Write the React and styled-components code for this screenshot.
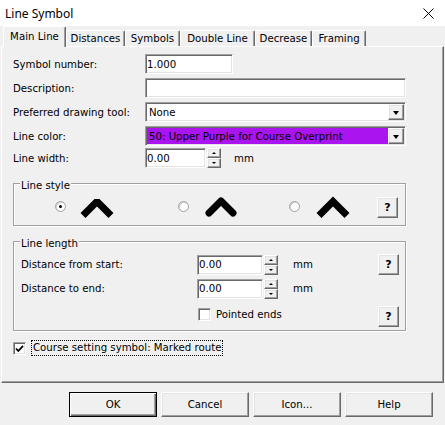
import styled, { createGlobalStyle, css } from 'styled-components'

const GlobalStyle = createGlobalStyle`
  html, body { margin: 0; padding: 0; background: #f0f0f0; }
  body { font-family: "DejaVu Sans", Tahoma, Verdana, sans-serif; font-size: 10.2px; color: #000; }
  * { box-sizing: border-box; }
`

const raised = css`
  background: #f0f0f0;
  border: 1px solid;
  border-color: #fff #696969 #696969 #fff;
  box-shadow: inset -1px -1px 0 #a0a0a0, inset 1px 1px 0 #e3e3e3;
`

const sunken = css`
  border: 1px solid;
  border-color: #a0a0a0 #fff #fff #a0a0a0;
  box-shadow: inset 1px 1px 0 #696969, inset -1px -1px 0 #e3e3e3;
`

const Window = styled.div`
  width: 445px;
  height: 425px;
  display: flex;
  flex-direction: column;
  background: #f0f0f0;
  overflow: hidden;
`

const TitleBar = styled.div`
  height: 26px;
  flex: none;
  background: #fff;
  display: flex;
  align-items: center;
  justify-content: space-between;
  padding: 0 11px 0 5px;
  font-family: "Noto Sans", "Open Sans", sans-serif;
  font-size: 12px;
`

const TabStrip = styled.div`
  height: 20px;
  flex: none;
  display: flex;
  align-items: flex-end;
  padding-left: 3px;
  position: relative;
  z-index: 1;
`

const Tab = styled.div`
  width: ${p => p.$w}px;
  height: ${p => (p.$active ? 21 : 16)}px;
  margin-bottom: ${p => (p.$active ? -1 : 0)}px;
  padding-bottom: ${p => (p.$active ? 2 : 0)}px;
  display: flex;
  align-items: center;
  justify-content: center;
  background: #f0f0f0;
  border-top: 1px solid #fff;
  border-left: 1px solid #fff;
  border-right: 1px solid #696969;
  box-shadow: inset -1px 0 0 #a0a0a0;
  border-top-left-radius: 2px;
  border-top-right-radius: 2px;
  white-space: nowrap;
`

const Panel = styled.div`
  margin-left: 1px;
  width: 443px;
  height: 337px;
  flex: none;
  border: 1px solid;
  border-color: #fff #696969 #696969 #fff;
  box-shadow: inset -1px -1px 0 #a0a0a0;
  padding: 7px 11px 0;
  display: flex;
  flex-direction: column;
`

const FieldRow = styled.div`
  display: flex;
  align-items: center;
  height: 20px;
  margin-top: ${p => p.$mt || 0}px;
`

const FieldLabel = styled.label`
  width: 132px;
  flex: none;
`

const TextBox = styled.div`
  ${sunken};
  background: #fff;
  width: ${p => p.$w}px;
  height: 20px;
  flex: none;
  padding-left: 1px;
  display: flex;
  align-items: center;
`

const Combo = styled.div`
  ${sunken};
  background: #fff;
  width: 261px;
  height: 20px;
  padding: 1px;
  display: flex;
`

const ComboValue = styled.div`
  flex: 1;
  display: flex;
  align-items: center;
  padding-left: 2px;
  background: ${p => p.$bg || '#fff'};
`

const DropButton = styled.div`
  ${raised};
  width: 16px;
  flex: none;
  display: flex;
  align-items: center;
  justify-content: center;
  &::after {
    content: '';
    border-left: 3.5px solid transparent;
    border-right: 3.5px solid transparent;
    border-top: 4px solid #000;
    margin-top: 1px;
  }
`

const SpinBox = styled.div`
  display: flex;
  gap: 1px;
  flex: none;
`

const SpinButtons = styled.div`
  width: ${p => p.$w}px;
  height: 20px;
  display: flex;
  flex-direction: column;
`

const SpinButton = styled.div`
  ${raised};
  flex: 1;
  display: flex;
  align-items: center;
  justify-content: center;
  &::after {
    content: '';
    border-left: 2px solid transparent;
    border-right: 2px solid transparent;
    ${p => (p.$down ? 'border-top: 2px solid #000;' : 'border-bottom: 2px solid #000;')}
  }
`

const Unit = styled.span`
  margin-left: ${p => p.$ml}px;
`

const Group = styled.div`
  position: relative;
  width: 393px;
  height: ${p => p.$h}px;
  margin-top: ${p => p.$mt}px;
  flex: none;
  border: 1px solid #a0a0a0;
  box-shadow: inset 1px 1px 0 #fff, 1px 1px 0 #fff;
`

const GroupTitle = styled.span`
  position: absolute;
  top: -4px;
  left: 6px;
  padding: 0 1px;
  line-height: 12px;
  background: #f0f0f0;
`

const StyleRow = styled.div`
  display: flex;
  align-items: center;
  height: 100%;
  padding-top: 6px;
`

const StyleOption = styled.div`
  display: flex;
  align-items: center;
  margin-left: ${p => p.$ml}px;
  gap: ${p => p.$gap}px;
`

const Radio = styled.span`
  width: 11px;
  height: 11px;
  margin-top: -3px;
  border-radius: 50%;
  background: #fff;
  border: 1px solid #a0a0a0;
  box-shadow: inset 1px 1px 0 #d0d0d0;
  display: flex;
  align-items: center;
  justify-content: center;
  &::after {
    content: '';
    width: 3px;
    height: 3px;
    border-radius: 50%;
    background: ${p => (p.$checked ? '#000' : 'transparent')};
  }
`

const HelpButton = styled.div`
  ${raised};
  width: 21px;
  height: 21px;
  margin-left: ${p => p.$ml || 0}px;
  display: flex;
  align-items: center;
  justify-content: center;
  font-weight: bold;
  font-size: 11px;
`

const LengthRows = styled.div`
  padding: 12px 6px 0 7px;
  display: flex;
  flex-direction: column;
`

const LengthRow = styled.div`
  display: grid;
  grid-template-columns: 176px 81px 1fr 21px;
  align-items: center;
  height: 21px;
  margin-top: ${p => p.$mt || 0}px;
`

const CheckRow = styled.div`
  display: flex;
  align-items: center;
  gap: 5px;
  margin-top: ${p => p.$mt || 0}px;
  margin-left: ${p => p.$ml || 0}px;
  white-space: nowrap;
`

const CheckBox = styled.span`
  ${sunken};
  background: #fff;
  width: 13px;
  height: 13px;
  flex: none;
  display: flex;
  align-items: center;
  justify-content: center;
`

const FocusLabel = styled.span`
  border: 1px dotted #000;
  padding: 0 1px;
  line-height: 14px;
`

const ButtonRow = styled.div`
  display: flex;
  justify-content: flex-end;
  gap: 4px;
  padding-right: 12px;
  margin-top: 9px;
`

const Button = styled.div`
  ${raised};
  width: 88px;
  height: 25px;
  display: flex;
  align-items: center;
  justify-content: center;
  ${p =>
    p.$default &&
    css`
      border: 1px solid #000;
      box-shadow: inset 1px 1px 0 #fff, inset -1px -1px 0 #696969, inset -2px -2px 0 #a0a0a0;
    `}
`

const Chevron = ({ join, cap, points }) => (
  <svg width="34" height="24" viewBox="0 0 34 24">
    <polyline
      points={points}
      fill="none"
      stroke="#000"
      strokeWidth="7"
      strokeLinejoin={join}
      strokeLinecap={cap}
    />
  </svg>
)

const Check = () => (
  <svg width="9" height="9" viewBox="0 0 9 9">
    <polyline points="1,4.5 3.3,7 8,1.8" fill="none" stroke="#000" strokeWidth="1.8" />
  </svg>
)

const Spin = ({ w, bw }) => (
  <SpinBox>
    <TextBox $w={w}>0.00</TextBox>
    <SpinButtons $w={bw}>
      <SpinButton />
      <SpinButton $down />
    </SpinButtons>
  </SpinBox>
)

const tabs = [
  ['Main Line', 63],
  ['Distances', 59],
  ['Symbols', 55],
  ['Double Line', 75],
  ['Decrease', 57],
  ['Framing', 54],
]

export default function App() {
  return (
    <Window>
      <GlobalStyle />
      <TitleBar>
        <span>Line Symbol</span>
        <svg width="11" height="11" viewBox="0 0 11 11">
          <path d="M0.5 0.5L10.5 10.5M10.5 0.5L0.5 10.5" stroke="#000" strokeWidth="1" />
        </svg>
      </TitleBar>

      <TabStrip>
        {tabs.map(([t, w], i) => (
          <Tab key={t} $w={w} $active={i === 0}>{t}</Tab>
        ))}
      </TabStrip>

      <Panel>
        <FieldRow>
          <FieldLabel>Symbol number:</FieldLabel>
          <TextBox $w={88}>1.000</TextBox>
        </FieldRow>
        <FieldRow $mt={4}>
          <FieldLabel>Description:</FieldLabel>
          <TextBox $w={261} />
        </FieldRow>
        <FieldRow $mt={4}>
          <FieldLabel>Preferred drawing tool:</FieldLabel>
          <Combo>
            <ComboValue>None</ComboValue>
            <DropButton />
          </Combo>
        </FieldRow>
        <FieldRow $mt={4}>
          <FieldLabel>Line color:</FieldLabel>
          <Combo>
            <ComboValue $bg="#a914ef">50: Upper Purple for Course Overprint</ComboValue>
            <DropButton />
          </Combo>
        </FieldRow>
        <FieldRow $mt={2}>
          <FieldLabel>Line width:</FieldLabel>
          <Spin w={61} bw={14} />
          <Unit $ml={13}>mm</Unit>
        </FieldRow>

        <Group $h={43} $mt={15}>
          <GroupTitle>Line style</GroupTitle>
          <StyleRow>
            <StyleOption $ml={41} $gap={14}>
              <Radio $checked />
              <Chevron join="bevel" cap="butt" points="3,19.5 17,5.5 31,19.5" />
            </StyleOption>
            <StyleOption $ml={64} $gap={15}>
              <Radio />
              <Chevron join="round" cap="round" points="5,17 17,5 29,17" />
            </StyleOption>
            <StyleOption $ml={51} $gap={16}>
              <Radio />
              <Chevron join="miter" cap="butt" points="3,19.5 17,5.5 31,19.5" />
            </StyleOption>
            <HelpButton $ml={27}>?</HelpButton>
          </StyleRow>
        </Group>

        <Group $h={90} $mt={15}>
          <GroupTitle>Line length</GroupTitle>
          <LengthRows>
            <LengthRow>
              <span>Distance from start:</span>
              <Spin w={66} bw={15} />
              <Unit $ml={15}>mm</Unit>
              <HelpButton>?</HelpButton>
            </LengthRow>
            <LengthRow $mt={3}>
              <span>Distance to end:</span>
              <Spin w={66} bw={15} />
              <Unit $ml={15}>mm</Unit>
            </LengthRow>
            <LengthRow $mt={7}>
              <span />
              <CheckRow $ml={1} $mt={-4}>
                <CheckBox />
                <span>Pointed ends</span>
              </CheckRow>
              <span />
              <HelpButton>?</HelpButton>
            </LengthRow>
          </LengthRows>
        </Group>

        <CheckRow $mt={9}>
          <CheckBox>
            <Check />
          </CheckBox>
          <FocusLabel>Course setting symbol: Marked route</FocusLabel>
        </CheckRow>
      </Panel>

      <ButtonRow>
        <Button $default>OK</Button>
        <Button>Cancel</Button>
        <Button>Icon...</Button>
        <Button>Help</Button>
      </ButtonRow>
    </Window>
  )
}
